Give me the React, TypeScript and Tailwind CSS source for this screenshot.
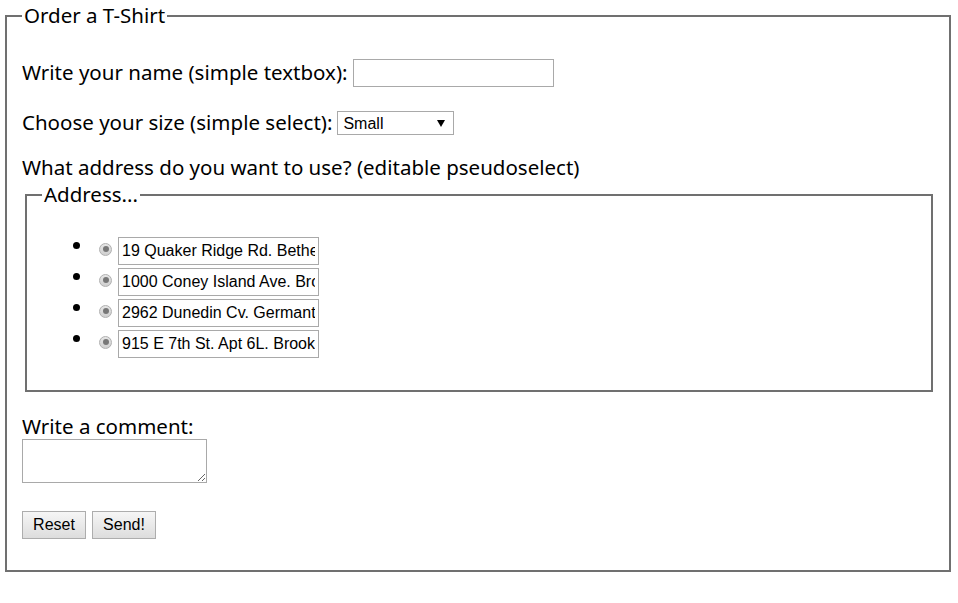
import React from "react";

const label = "font-['Noto_Sans',sans-serif] text-[20.5px] text-black";
const field = "font-['Liberation_Sans',Arial,sans-serif] text-[16px] text-black";

function Radio() {
  return (
    <span className="mb-[4px] ml-[5px] mr-[6px] inline-flex h-[13px] w-[13px] shrink-0 items-center justify-center rounded-full border border-[#b0b0b0] bg-gradient-to-b from-[#e6e6e6] to-[#cfcfcf]">
      <span className="h-[6px] w-[6px] rounded-full bg-[#777777]" />
    </span>
  );
}

const addresses = [
  "19 Quaker Ridge Rd. Bethel CT 06801",
  "1000 Coney Island Ave. Brooklyn NY 11230",
  "2962 Dunedin Cv. Germantown TN 38138",
  "915 E 7th St. Apt 6L. Brooklyn NY 11230",
];

export default function App() {
  return (
    <div className="min-h-[603px] w-[958px] bg-white pt-[4px]">
      <fieldset className={`${label} ml-[5px] mr-[7px] border-2 border-[#707070] pb-[31px] pl-[15px] pr-[15px]`}>
        <legend className="h-[24px] px-[2px] leading-[22px]">Order a T-Shirt</legend>

        <div className="mt-[31px] flex h-[28px] items-center">
          <span className="mb-[3px] leading-[24px]">Write your name (simple textbox):</span>
          <input
            type="text"
            className={`${field} ml-[5px] h-[28px] w-[201px] border border-[#a9a9a9] px-[3px] outline-none`}
          />
        </div>

        <div className="mt-[22px] flex h-[28px] items-center">
          <span className="mb-[3px] leading-[24px]">Choose your size (simple select):</span>
          <div className="relative ml-[5px] flex h-[24px] w-[117px]">
            <select
              defaultValue="Small"
              className={`${field} block h-[24px] w-[117px] appearance-none border border-[#a9a9a9] bg-white pl-[5px] outline-none`}
            >
              <option>Small</option>
              <option>Medium</option>
              <option>Large</option>
            </select>
            <span className="pointer-events-none absolute right-[9px] top-[9px] h-0 w-0 border-x-[4px] border-t-[7px] border-x-transparent border-t-black" />
          </div>
        </div>

        <div className="mt-[17px] flex h-[28px] items-center">
          <span className="mb-[3px] leading-[24px]">What address do you want to use? (editable pseudoselect)</span>
        </div>

        <fieldset className="ml-[3px] mr-[1px] mt-[1px] border-2 border-[#707070] pb-[39px] pl-[15px] pr-[15px]">
          <legend className="h-[24px] px-[2px] leading-[22px]">Address...</legend>
          <ul className="mt-[23px] list-disc pl-[52px]">
            {addresses.map((a, i) => (
              <li key={i} className={`${i > 0 ? "mt-[3px]" : ""} h-[28px] leading-[28px]`}>
                <div className="flex h-[28px] items-center">
                  <Radio />
                  <input
                    type="text"
                    readOnly
                    value={a}
                    className={`${field} h-[28px] w-[201px] border border-[#a9a9a9] px-[3px] outline-none`}
                  />
                </div>
              </li>
            ))}
          </ul>
        </fieldset>

        <div className="mt-[23px] h-[24px] leading-[22px]">Write a comment:</div>
        <textarea
          className={`${field} block h-[44px] w-[185px] border border-[#a9a9a9] outline-none`}
        />

        <div className="mt-[28px] flex gap-[6px]">
          <button className="h-[28px] w-[64px] border border-[#adadad] bg-gradient-to-b from-[#f6f6f6] to-[#dddddd] font-['Liberation_Sans',Arial,sans-serif] text-[16px] text-black">
            Reset
          </button>
          <button className="h-[28px] w-[64px] border border-[#adadad] bg-gradient-to-b from-[#f6f6f6] to-[#dddddd] font-['Liberation_Sans',Arial,sans-serif] text-[16px] text-black">
            Send!
          </button>
        </div>
      </fieldset>
    </div>
  );
}
